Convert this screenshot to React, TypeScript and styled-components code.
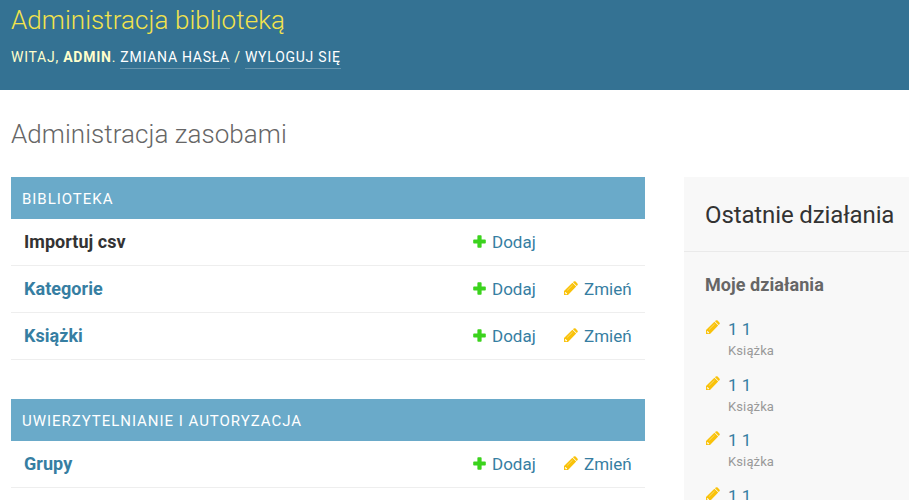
import React from "react";
import styled, { createGlobalStyle } from "styled-components";

const Global = createGlobalStyle`
  * { box-sizing: border-box; }
  html, body { margin: 0; padding: 0; background: #fff; }
  body { font-family: Roboto, "Open Sans", sans-serif; color: #333; width: 909px; height: 500px; overflow: hidden; }
  a { text-decoration: none; color: #367ea2; }
  h1, h2, h3, p, ul { margin: 0; padding: 0; }
`;
const Page = styled.div`width: 909px; height: 500px; overflow: hidden;`;
const Header = styled.header`
  height: 90px; background: #347293; padding: 4px 11px 0; color: #ffc;
`;
const Brand = styled.h1`
  font-size: 26px; line-height: 32px; font-weight: 300; letter-spacing: 0.06px; color: #f2e34c; white-space: nowrap;
`;
const UserTools = styled.div`
  margin-top: 12px; font-size: 14px; line-height: 18px; letter-spacing: 0.75px; font-weight: 400;
  text-transform: uppercase; white-space: nowrap;
`;
const ToolLink = styled.a`
  display: inline-block; color: #fff; height: 21px; border-bottom: 1px solid rgba(255,255,255,.25);
`;
const Title = styled.h1`
  padding: 28px 11px 0; font-size: 26px; line-height: 32px; font-weight: 300; letter-spacing: 0.05px; color: #666;
`;
const Content = styled.div`display: flex; gap: 39px; margin: 27px 0 0 11px; align-items: flex-start;`;
const Main = styled.main`width: 634px; display: flex; flex-direction: column; gap: 39px;`;
const Module = styled.section``;
const Caption = styled.h2`
  height: 42px; background: #6aaac9; color: #fff; padding-left: 11px; font-size: 15px; line-height: 44px;
  font-weight: 400; letter-spacing: 0.97px; text-transform: uppercase; white-space: nowrap;
`;
const Row = styled.div`
  display: grid; grid-template-columns: 461px 91px 1fr; height: 47px; line-height: 46px;
  border-bottom: 1px solid #eee; font-size: 17px;
`;
const Model = styled.a<{ $plain?: boolean }>`
  padding-left: 13px; font-weight: 700; font-size: 18px; letter-spacing: 0.04px;
  color: ${p => (p.$plain ? "#333" : "#367ea2")};
`;
const Action = styled.a`display: flex; align-items: center; white-space: nowrap;`;
const Label = styled.span`margin-left: 6px;`;
const Side = styled.aside`width: 225px; height: 400px; background: #f8f8f8;`;
const SideTitle = styled.h2`
  height: 75px; padding: 1px 0 0 21px; line-height: 74px; font-size: 24px; font-weight: 400; letter-spacing: -0.12px;
  border-bottom: 1px solid #eaeaea; white-space: nowrap;
`;
const SideSub = styled.h3`
  padding: 20px 0 0 21px; font-size: 18px; line-height: 26px; font-weight: 700; letter-spacing: 0.05px; color: #666;
`;
const List = styled.ul`list-style: none; padding: 20px 0 0 21px;`;
const Entry = styled.li`
  display: grid; grid-template-columns: 23px 1fr; height: 55.6px; font-size: 17px; line-height: 23px;
`;
const EntryIcon = styled.span`display: block; padding-top: 2px;`;
const Kind = styled.span`display: block; font-size: 13px; line-height: 20px; letter-spacing: 0.12px; color: #999;`;
const IconSvg = styled.svg`display: block; flex: none; margin: 0 0 2px 1px;`;

const Plus = () => (
  <IconSvg width="13" height="13" viewBox="0 0 13 13">
    <path fill="#3bd31d" d="M5.2 .2h2.6q.8 0 .8.8v3.4H12q.8 0 .8.8v2.6q0 .8-.8.8H8.6V12q0 .8-.8.8H5.2q-.8 0-.8-.8V8.6H1q-.8 0-.8-.8V5.2q0-.8.8-.8h3.4V1q0-.8.8-.8z" />
  </IconSvg>
);
const Pencil = () => (
  <IconSvg width="14" height="14" viewBox="0 0 14 14">
    <path fill="#f9c20a" fillRule="evenodd" d="M0 14v-4L8.4 1.8l3.8 3.8L4 14zM.9 11.5v.9h.8v.8h.9l.6-.6-1.7-1.7zM9 1.3l.7-.7q1-.9 1.9 0l1.8 1.8q.9.9 0 1.9l-.7.7z" />
    <path stroke="#fff" strokeOpacity=".65" strokeWidth=".6" d="m3.2 9.4 5.4-5.3" />
  </IconSvg>
);

const ModelRow = ({ name, plain }: { name: string; plain?: boolean }) => (
  <Row>
    <Model $plain={plain}>{name}</Model>
    <Action><Plus /><Label>Dodaj</Label></Action>
    {!plain && <Action><Pencil /><Label>Zmień</Label></Action>}
  </Row>
);

export default function App() {
  return (
    <Page>
      <Global />
      <Header>
        <Brand>Administracja biblioteką</Brand>
        <UserTools>Witaj, <strong>admin</strong>. <ToolLink>Zmiana hasła</ToolLink> / <ToolLink>Wyloguj się</ToolLink></UserTools>
      </Header>
      <Title>Administracja zasobami</Title>
      <Content>
        <Main>
          <Module>
            <Caption>Biblioteka</Caption>
            <ModelRow name="Importuj csv" plain />
            <ModelRow name="Kategorie" />
            <ModelRow name="Książki" />
          </Module>
          <Module>
            <Caption>Uwierzytelnianie i autoryzacja</Caption>
            <ModelRow name="Grupy" />
          </Module>
        </Main>
        <Side>
          <SideTitle>Ostatnie działania</SideTitle>
          <SideSub>Moje działania</SideSub>
          <List>
            {[0, 1, 2, 3].map(i => (
              <Entry key={i}><EntryIcon><Pencil /></EntryIcon><div><a>1 1</a><Kind>Książka</Kind></div></Entry>
            ))}
          </List>
        </Side>
      </Content>
    </Page>
  );
}
